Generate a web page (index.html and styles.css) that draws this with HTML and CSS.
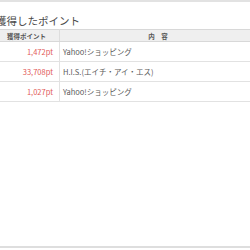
FILE: index.html
```html
<!DOCTYPE html>
<html lang="ja">
<head>
<meta charset="utf-8">
<link rel="stylesheet" href="styles.css">
</head>
<body>
<div class="topbar"></div>
<section class="panel">
  <h2 class="panel-title">獲得したポイント</h2>
  <table class="points">
    <thead>
      <tr><th class="col-pt">獲得ポイント</th><th class="col-desc">内　容</th></tr>
    </thead>
    <tbody>
      <tr><td class="pt">1,472pt</td><td class="desc">Yahoo!ショッピング</td></tr>
      <tr><td class="pt">33,708pt</td><td class="desc">H.I.S.(エイチ・アイ・エス)</td></tr>
      <tr><td class="pt">1,027pt</td><td class="desc">Yahoo!ショッピング</td></tr>
    </tbody>
  </table>
</section>
<div class="footer-line"></div>
</body>
</html>
```
FILE: styles.css
```css
html, body {
  margin: 0;
  padding: 0;
  background: #fff;
  width: 250px;
  height: 250px;
  overflow: hidden;
  font-family: "Noto Sans CJK JP", "Noto Sans", sans-serif;
  color: #555;
}
body {
  display: flex;
  flex-direction: column;
}
.topbar {
  height: 2px;
  background: #e2e2e2;
  border-bottom: 3px solid #fff;
  box-shadow: 0 5px 0 -4px #f0f0f0;
}
.panel {
  margin-left: -6px;
  width: 262px;
}
.panel-title {
  margin: 0;
  padding: 9px 0 0 2px;
  height: 24px;
  box-sizing: border-box;
  font-size: 10.5px;
  font-weight: normal;
  line-height: 14px;
  color: #4a4a4a;
}
.points {
  width: 100%;
  border-collapse: collapse;
  font-size: 7.5px;
}
.points th {
  background: #efefef;
  border-top: 1px solid #d8d8d8;
  border-bottom: 1px solid #d8d8d8;
  height: 11px;
  padding: 0;
  font-weight: bold;
  color: #555;
  font-size: 6.5px;
}
.points th.col-pt {
  width: 65px;
  border-right: 1px solid #ddd;
}
.points td {
  height: 19px;
  padding: 0;
  border-bottom: 1px solid #e2e2e2;
}
.points td.pt {
  text-align: right;
  padding-right: 6px;
  color: #e25a59;
  border-right: 1px solid #e2e2e2;
}
.points td.desc {
  padding-left: 3px;
  color: #5a5a5a;
}
.footer-line {
  margin-top: auto;
  height: 2px;
  margin-bottom: 2px;
  background: #dedede;
  box-shadow: 0 -4px 0 -3px #f2f2f2;
}
```
